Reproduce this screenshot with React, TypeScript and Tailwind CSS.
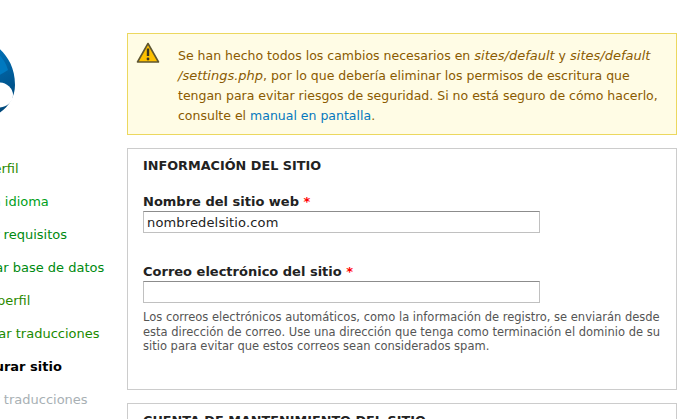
const STEPS = [
  { label: "Elegir perfil", className: "pl-[4px] text-[#2a8a00]" },
  { label: "Elegir un idioma", className: "pl-[3px] text-[#00a020]" },
  { label: "Verificar requisitos", className: "pl-[6px] text-[#008a10]" },
  { label: "Configurar base de datos", className: "text-[#008a10]" },
  { label: "Instalar perfil", className: "pl-[4px] text-[#2a8a00]" },
  { label: "Configurar traducciones", className: "pl-[3px] text-[#1a8a00]" },
  { label: "Configurar sitio", className: "pl-[8px] font-bold text-black" },
  { label: "Finalizar traducciones", className: "pl-[6px] text-[#a8b0b4]" },
];

function Logo() {
  return (
    <svg width="80" height="90" viewBox="0 0 80 90" className="block">
      <defs>
        <linearGradient id="drop" x1="0.7" y1="0.2" x2="1" y2="0.8">
          <stop offset="0" stopColor="#0073ba" />
          <stop offset="0.6" stopColor="#005a96" />
          <stop offset="1" stopColor="#00497c" />
        </linearGradient>
      </defs>
      <path d="M42 0 C46 10 80 17 80 55 C80 75 62 90 40 90 C18 90 0 75 0 55 C0 25 40 14 42 0 Z" fill="url(#drop)" />
      <path d="M42 6 C50 14 68 22 73 40 C62 48 50 50 40 46 Z" fill="#0079c0" />
      <ellipse cx="64" cy="65" rx="14" ry="12.5" fill="#ffffff" />
    </svg>
  );
}

function Req() {
  return <span className="text-[#f00]"> *</span>;
}

export default function App() {
  return (
    <div className="h-[419px] w-[690px] overflow-hidden bg-white font-['DejaVu_Sans',sans-serif] text-[13px] text-[#3b3b3b]">
      <div className="flex items-start pt-[33px]">
        <aside className="w-[127px] shrink-0">
          <div className="-ml-[65px] -mt-[3px]">
            <Logo />
          </div>
          <ul className="-ml-[60px] mt-[32px] w-[187px] whitespace-nowrap leading-[33px]">
            {STEPS.map((step) => (
              <li key={step.label} className={step.className}>
                {step.label}
              </li>
            ))}
          </ul>
        </aside>
        <main className="w-[550px] shrink-0">
          <div className="flex h-[102px] border border-[#ecd85f] bg-[#fffce5] pl-[8px] pr-3 pt-[12px] text-[12.5px] leading-[20px] text-[#8a5a00]">
            <svg width="24" height="22" viewBox="0 0 24 22" className="-mt-[4px] shrink-0">
              <path d="M12 1.5 L22.5 20 H1.5 Z" fill="#fdc000" stroke="#5f5630" strokeWidth="1.6" strokeLinejoin="round" />
              <path d="M12 6.5 V14" stroke="#3a3520" strokeWidth="2.4" />
              <circle cx="12" cy="17" r="1.4" fill="#3a3520" />
            </svg>
            <p className="ml-[18px] w-[482px]">
              Se han hecho todos los cambios necesarios en <em className="text-[13px]">sites/default</em> y <em className="text-[13px]">sites/default /settings.php</em>, por lo que debería eliminar los permisos de escritura que tengan para evitar riesgos de seguridad. Si no está seguro de cómo hacerlo, consulte el <a className="text-[#0678be]">manual en pantalla</a>.
            </p>
          </div>
          <section className="mt-[13px] h-[242px] border border-[#ccc] px-[15px] pt-[9px]">
            <h2 className="text-[12.8px] font-bold uppercase leading-[16px] text-[#222]">Información del sitio</h2>
            <label className="mt-[20px] block font-bold leading-[16px] text-[#222]">
              Nombre del sitio web<Req />
            </label>
            <input
              readOnly
              value="nombredelsitio.com"
              className="mt-[1px] block h-[22px] w-[397px] border border-[#c0c0c0] border-t-[#8c8c8c] px-[3px] text-[13px] tracking-[0.15px] text-[#222]"
            />
            <label className="mt-[31px] block font-bold leading-[16px] text-[#222]">
              Correo electrónico del sitio<Req />
            </label>
            <input readOnly className="mt-[1px] block h-[22px] w-[397px] border border-[#c0c0c0] border-t-[#8c8c8c] px-[3px]" />
            <p className="mt-[7px] w-[525px] text-[11.5px] leading-[14.5px] text-[#555]">
              Los correos electrónicos automáticos, como la información de registro, se enviarán desde esta dirección de correo. Use una dirección que tenga como terminación el dominio de su sitio para evitar que estos correos sean considerados spam.
            </p>
          </section>
          <section className="mt-[13px] h-[60px] border border-[#ccc] px-[15px] pt-[9px]">
            <h2 className="text-[12.8px] font-bold uppercase leading-[16px] text-[#222]">Cuenta de mantenimiento del sitio</h2>
          </section>
        </main>
      </div>
    </div>
  );
}
